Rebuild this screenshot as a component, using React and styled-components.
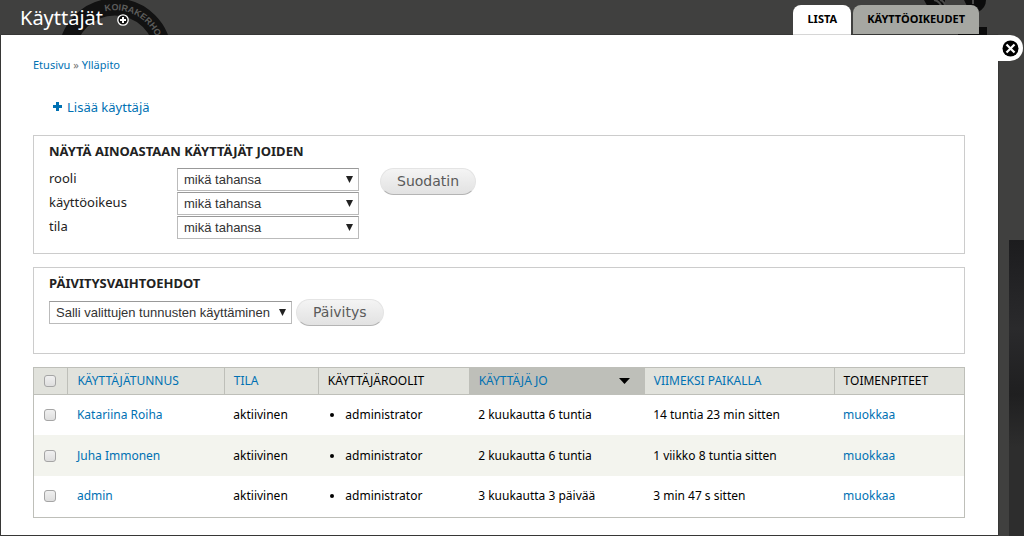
import { useState } from 'react';
import styled, { createGlobalStyle } from 'styled-components';

const GlobalStyle = createGlobalStyle`
  * {
    box-sizing: border-box;
  }

  body {
    margin: 0;
    background: #40403f;
    color: #000;
    font-family: 'Noto Sans', 'Open Sans', sans-serif;
    font-size: 12px;
    line-height: 18px;
  }
`;

const Page = styled.div`
  position: relative;
  min-height: 100vh;
  overflow: hidden;
`;

const Seal = styled.svg`
  position: absolute;
  top: -2px;
  left: 58px;
`;

const Blot = styled.svg`
  position: absolute;
  top: 0;
  right: 34px;
`;

const Backdrop = styled.div`
  position: absolute;
  top: 240px;
  right: 0;
  bottom: 0;
  width: 15px;
  background: linear-gradient(#1c1c1e, #2a2a2c 30%, #1f1f20 52%, #2d2d2d 70%);
`;

const TopBar = styled.header`
  position: relative;
  display: flex;
  justify-content: space-between;
  align-items: flex-end;
  height: 35px;
  padding: 0 45px 0 20px;
`;

const TitleGroup = styled.div`
  display: flex;
  align-items: center;
  gap: 14px;
  height: 35px;
  padding-top: 5px;
`;

const PageTitle = styled.h1`
  margin: 0;
  padding-bottom: 4px;
  color: #fff;
  font-size: 20px;
  font-weight: 400;
  line-height: 28px;
`;

const IconButton = styled.button`
  display: flex;
  padding: 0;
  border: 0;
  background: none;
  cursor: pointer;
`;

const TabList = styled.nav`
  display: flex;
  gap: 2px;
`;

const Tab = styled.a`
  height: ${({ $active }) => ($active ? '30px' : '29px')};
  padding: 0 14px;
  border-radius: 8px 8px 0 0;
  background: ${({ $active }) => ($active ? '#fff' : '#a6a7a2')};
  color: #000;
  font-size: 11px;
  font-weight: 700;
  line-height: 28px;
  text-decoration: none;
  text-transform: uppercase;
`;

const Overlay = styled.main`
  position: relative;
  min-height: calc(100vh - 36px);
  margin: 0 26px 0 1px;
  padding: 21px 33px 17px 32px;
  background: #fff;
  box-shadow: 0 0 1px #111;
`;

const CloseTab = styled.div`
  position: absolute;
  top: 0;
  left: 100%;
  display: flex;
  align-items: center;
  width: 25px;
  height: 26px;
  padding-left: 4px;
  border-radius: 0 13px 13px 0;
  background: #fff;
`;

const Link = styled.a`
  color: #0071b3;
  text-decoration: none;
`;

const Breadcrumb = styled.nav`
  color: #777;
  font-size: 11px;
`;

const Actions = styled.div`
  margin: 23px 0 19px 20px;
  font-size: 13px;
`;

const AddLink = styled(Link)`
  display: inline-flex;
  align-items: center;
  gap: 5px;
`;

const Panel = styled.fieldset`
  min-width: 0;
  min-height: ${({ $short }) => ($short ? '87px' : '119px')};
  margin: 0 0 13px;
  padding: 6px 15px 14px;
  border: 1px solid #ccc;
`;

const PanelTitle = styled.legend`
  float: left;
  width: 100%;
  padding: 0;
  color: #222;
  font-size: 13px;
  font-weight: 700;
  text-transform: uppercase;
`;

const PanelBody = styled.div`
  clear: both;
  display: flex;
  align-items: ${({ $tight }) => ($tight ? 'center' : 'flex-start')};
  gap: ${({ $tight }) => ($tight ? '4px' : '21px')};
  padding-top: ${({ $tight }) => ($tight ? '7px' : '8px')};
`;

const Filters = styled.div`
  display: grid;
  grid-template-columns: 128px 182px;
  row-gap: 1px;
`;

const Label = styled.label`
  padding-top: 1px;
  color: #222;
  font-size: 13px;
`;

const SelectBox = styled.span`
  position: relative;
  display: block;
`;

const Select = styled.select`
  display: block;
  width: 100%;
  height: 23px;
  padding: 0 21px 0 6px;
  border: 1px solid #bbb;
  border-top-color: #999;
  border-radius: 0;
  background: #fff;
  color: #333;
  font-family: 'Liberation Sans', Arial, sans-serif;
  font-size: 13px;
  appearance: none;
`;

const SelectArrow = styled.svg`
  position: absolute;
  top: 8px;
  right: 6px;
  pointer-events: none;
`;

const Button = styled.button`
  height: 27px;
  padding: 0 16px;
  border: 1px solid #e4e4e4;
  border-bottom-color: #b4b4b4;
  border-radius: 14px;
  background: linear-gradient(#f4f4f4, #e2e2e2);
  color: #5a5a5a;
  font-family: 'DejaVu Sans', Verdana, sans-serif;
  font-size: 14px;
  cursor: pointer;
`;

const Table = styled.table`
  width: 100%;
  border: 1px solid #bebfb9;
  border-collapse: collapse;
  table-layout: fixed;
`;

const HeadCell = styled.th`
  height: 27px;
  padding: 0 9px;
  border-bottom: 1px solid #bebfb9;
  border-left: 1px solid #bebfb9;
  background: ${({ $sorted }) => ($sorted ? '#bebfb9' : '#e1e2dc')};
  font-weight: 400;
  text-align: left;
  text-transform: uppercase;
  white-space: nowrap;
`;

const SortLink = styled(Link)`
  display: flex;
  justify-content: space-between;
  align-items: center;
  padding-right: 5px;
`;

const Row = styled.tr`
  background: ${({ $even }) => ($even ? '#f3f4ee' : '#fff')};
`;

const Cell = styled.td`
  height: 41px;
  padding: 0 9px;
`;

const RoleList = styled.ul`
  margin: 0;
  padding-left: 18px;
`;

const Checkbox = styled.input`
  display: block;
  width: 12px;
  height: 12px;
  margin: 0 0 0 1px;
  border: 1px solid #a5a5a5;
  border-radius: 3px;
  background: linear-gradient(#f0f0f0, #dedede);
  appearance: none;

  &:checked {
    background: #0071b3;
  }
`;

const columns = [
  { title: 'Käyttäjätunnus', width: '16.8%', sortable: true },
  { title: 'Tila', width: '10.1%', sortable: true },
  { title: 'Käyttäjäroolit', width: '16.2%' },
  { title: 'Käyttäjä jo', width: '18.8%', sortable: true, sorted: true },
  { title: 'Viimeksi paikalla', width: '20.4%', sortable: true },
  { title: 'Toimenpiteet' },
];

const users = [
  { name: 'Katariina Roiha', member: '2 kuukautta 6 tuntia', seen: '14 tuntia 23 min sitten' },
  { name: 'Juha Immonen', member: '2 kuukautta 6 tuntia', seen: '1 viikko 8 tuntia sitten' },
  { name: 'admin', member: '3 kuukautta 3 päivää', seen: '3 min 47 s sitten' },
];

const SelectField = ({ id, option, ...rest }) => (
  <SelectBox>
    <Select id={id} {...rest}>
      <option>{option}</option>
    </Select>
    <SelectArrow width="7" height="7" aria-hidden="true">
      <path d="M0 0h7L3.5 7z" fill="#222" />
    </SelectArrow>
  </SelectBox>
);

const App = () => {
  const [selected, setSelected] = useState([]);
  const allSelected = selected.length === users.length;

  const toggle = (name) =>
    setSelected((now) => (now.includes(name) ? now.filter((n) => n !== name) : [...now, name]));

  return (
    <Page>
      <GlobalStyle />
      <Seal width="114" height="114" viewBox="0 0 114 114" aria-hidden="true">
        <circle cx="57" cy="57" r="48" fill="none" stroke="#121212" strokeWidth="17" />
        <defs>
          <path id="arc" d="M47 13.3A44.8 44.8 0 0 1 101.8 57" />
        </defs>
        <text fill="#5c5c5b" fontSize="9" fontWeight="700" fontFamily="Liberation Sans, sans-serif">
          <textPath href="#arc">KOIRAKERHO</textPath>
        </text>
      </Seal>
      <Blot width="66" height="36" aria-hidden="true">
        <path d="M0 0h21v8H6q-4-3-6-8zM40 0h22q0 8-8 12h-8zM54 27h9v9H34v-2h20z" fill="#0c0c0c" />
        <path d="M10 0q6 1 8 8M16 0q4 1 5 5M49 0v4" fill="none" stroke="#4a4a49" strokeWidth="2" />
      </Blot>
      <Backdrop />

      <TopBar>
        <TitleGroup>
          <PageTitle>Käyttäjät</PageTitle>
          <IconButton aria-label="Lisää pikavalintoihin">
            <svg width="12" height="12" viewBox="0 0 12 12">
              <circle cx="6" cy="6" r="5.2" fill="#111" stroke="#fff" strokeWidth="1.3" />
              <path d="M6 3v6M3 6h6" stroke="#fff" strokeWidth="2" />
            </svg>
          </IconButton>
        </TitleGroup>
        <TabList>
          <Tab href="#lista" $active>Lista</Tab>
          <Tab href="#oikeudet">Käyttöoikeudet</Tab>
        </TabList>
      </TopBar>

      <Overlay>
        <CloseTab>
          <IconButton aria-label="Sulje">
            <svg width="17" height="17" viewBox="0 0 17 17">
              <circle cx="8.5" cy="8.5" r="8" fill="#000" />
              <path d="M4.5 4.5l8 8M12.5 4.5l-8 8" stroke="#fff" strokeWidth="2.2" />
            </svg>
          </IconButton>
        </CloseTab>

        <Breadcrumb>
          <Link href="#etusivu">Etusivu</Link> » <Link href="#yllapito">Ylläpito</Link>
        </Breadcrumb>

        <Actions>
          <AddLink href="#lisaa">
            <svg width="9" height="9" viewBox="0 0 9 9" aria-hidden="true">
              <path d="M3 0h3v3h3v3H6v3H3V6H0V3h3z" fill="#0071b3" />
            </svg>
            Lisää käyttäjä
          </AddLink>
        </Actions>

        <Panel>
          <PanelTitle>Näytä ainoastaan käyttäjät joiden</PanelTitle>
          <PanelBody>
            <Filters>
              {['rooli', 'käyttöoikeus', 'tila'].map((name) => [
                <Label key={`${name}-label`} htmlFor={name}>{name}</Label>,
                <SelectField key={name} id={name} option="mikä tahansa" />,
              ])}
            </Filters>
            <Button type="button">Suodatin</Button>
          </PanelBody>
        </Panel>

        <Panel $short>
          <PanelTitle>Päivitysvaihtoehdot</PanelTitle>
          <PanelBody $tight>
            <SelectField
              id="operation"
              aria-label="Päivitysvaihtoehdot"
              option="Salli valittujen tunnusten käyttäminen"
            />
            <Button type="button">Päivitys</Button>
          </PanelBody>
        </Panel>

        <Table>
          <colgroup>
            <col style={{ width: '3.7%' }} />
            {columns.map(({ title, width }) => <col key={title} style={{ width }} />)}
          </colgroup>
          <thead>
            <tr>
              <HeadCell>
                <Checkbox
                  type="checkbox"
                  aria-label="Valitse kaikki"
                  checked={allSelected}
                  onChange={() => setSelected(allSelected ? [] : users.map((u) => u.name))}
                />
              </HeadCell>
              {columns.map(({ title, sortable, sorted }) => (
                <HeadCell key={title} $sorted={sorted}>
                  {sortable ? (
                    <SortLink href="#sort">
                      {title}
                      {sorted && (
                        <svg width="11" height="6" aria-hidden="true">
                          <path d="M0 0h11L5.5 6z" />
                        </svg>
                      )}
                    </SortLink>
                  ) : title}
                </HeadCell>
              ))}
            </tr>
          </thead>
          <tbody>
            {users.map(({ name, member, seen }, i) => (
              <Row key={name} $even={i % 2 === 1}>
                <Cell>
                  <Checkbox
                    type="checkbox"
                    aria-label={name}
                    checked={selected.includes(name)}
                    onChange={() => toggle(name)}
                  />
                </Cell>
                <Cell><Link href="#user">{name}</Link></Cell>
                <Cell>aktiivinen</Cell>
                <Cell><RoleList><li>administrator</li></RoleList></Cell>
                <Cell>{member}</Cell>
                <Cell>{seen}</Cell>
                <Cell><Link href="#edit">muokkaa</Link></Cell>
              </Row>
            ))}
          </tbody>
        </Table>
      </Overlay>
    </Page>
  );
};

export default App;
